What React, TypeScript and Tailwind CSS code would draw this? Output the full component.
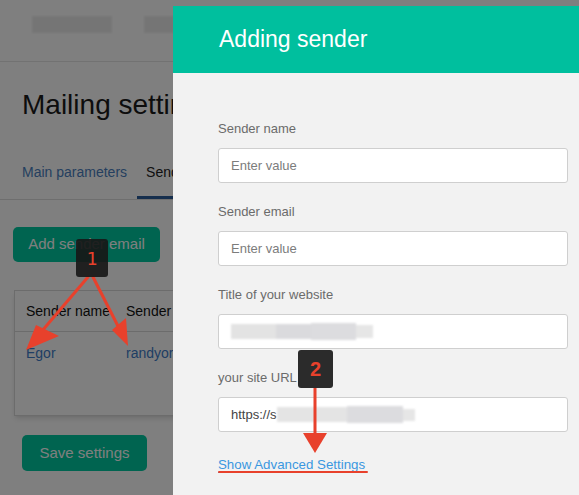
import React from "react";

const font = { fontFamily: '"Liberation Sans", Arial, sans-serif' };

function Field({ label, children }: { label: string; children: React.ReactNode }) {
  return (
    <div className="mb-5">
      <div className="text-[13px] leading-[18px] text-[#6b6b6b] mb-[10px]">{label}</div>
      <div className="h-[35px] w-[350px] rounded-[3px] border border-[#cfcfcf] bg-white flex items-center px-3 text-[13px]">
        {children}
      </div>
    </div>
  );
}

export default function App() {
  return (
    <div className="relative w-[579px] h-[495px] overflow-hidden bg-white" style={font}>
      {/* Page behind the modal */}
      <div className="flex flex-col">
        <div className="flex gap-8 pl-8 pt-4 h-[62px] items-start border-b border-[#e4e4e4]">
          <div className="w-[80px] h-[17px] bg-[#ebebeb] blur-[1px]" />
          <div className="w-[30px] h-[17px] bg-[#ebebeb] blur-[1px]" />
        </div>
        <h1 className="pl-[22px] pt-[25px] text-[28px] leading-[36px] text-[#1a1a1a]">Mailing settings</h1>
        <div className="mt-[39px] flex border-b border-[#dcdcdc] text-[14px]">
          <div className="pl-[22px] pr-[10px] pb-[15px] text-[#4a7fc0]">Main parameters</div>
          <div className="px-[9px] pb-[13px] border-b-[3px] border-[#2a5d9a] text-[#222]">Senders</div>
        </div>
        <div className="pl-[13px] pt-[27px]">
          <button className="h-[35px] w-[147px] rounded-[5px] bg-[#00c9a0] text-white text-[15px]">Add sender email</button>
        </div>
        <div className="ml-[14px] mt-[28px] w-[400px] h-[126px] border border-[#d8d8d8] bg-white shadow-md">
          <div className="flex h-[41px] items-center border-b border-[#d8d8d8] text-[14px] text-[#111]">
            <div className="w-[111px] pl-[11px]">Sender name</div>
            <div>Sender email</div>
          </div>
          <div className="flex h-[42px] items-center text-[14px] text-[#3e7cc8]">
            <div className="w-[111px] pl-[11px]">Egor</div>
            <div>randyorton@mail.com</div>
          </div>
        </div>
        <div className="pl-[22px] pt-[19px]">
          <button className="h-[36px] w-[125px] rounded-[5px] bg-[#00c9a0] text-white text-[15px]">Save settings</button>
        </div>
      </div>

      {/* Dim overlay */}
      <div className="absolute inset-0 bg-black/50" />

      {/* Modal */}
      <div className="absolute left-[173px] top-[6px] w-[420px] h-[500px] bg-[#f2f2f2]">
        <div className="h-[67px] bg-[#00bf9e] flex items-center pl-[46px]">
          <div className="text-[23px] text-white">Adding sender</div>
        </div>
        <div className="pl-[45px] pt-[47px]">
          <Field label="Sender name">
            <span className="text-[#7c7c7c]">Enter value</span>
          </Field>
          <Field label="Sender email">
            <span className="text-[#7c7c7c]">Enter value</span>
          </Field>
          <Field label="Title of your website">
            <div className="flex items-center blur-[1px]">
              <div className="w-[45px] h-[15px] bg-[#e3e3e3]" />
              <div className="w-[35px] h-[15px] bg-[#dadadd]" />
              <div className="w-[45px] h-[17px] bg-[#dcdcdf]" />
              <div className="w-[17px] h-[13px] bg-[#e6e6e6]" />
            </div>
          </Field>
          <Field label="your site URL">
            <span className="text-[#444]">https://s</span>
            <div className="flex items-center blur-[1px]">
              <div className="w-[70px] h-[15px] bg-[#e4e4e4]" />
              <div className="w-[56px] h-[17px] bg-[#dcdcdf]" />
              <div className="w-[12px] h-[12px] bg-[#e6e6e6]" />
            </div>
          </Field>
          <a className="text-[13.3px] leading-[18px] text-[#3a97e0] border-b border-dashed border-[#3a97e0] cursor-pointer">
            Show Advanced Settings
          </a>
        </div>
      </div>

      {/* Annotations */}
      <svg className="absolute inset-0" width="579" height="495" viewBox="0 0 579 495">
        <g stroke="#e8412c" strokeWidth="3" strokeLinecap="round" fill="#e8412c">
          <line x1="88" y1="277" x2="36" y2="338" />
          <line x1="93" y1="277" x2="122" y2="334" />
          <line x1="315" y1="385" x2="315" y2="440" />
          <line x1="219" y1="472" x2="367" y2="472" strokeWidth="2" />
        </g>
        <g fill="#e8412c">
          <polygon points="26,350 36,325 59,336" />
          <polygon points="128,346 112,330 126,318" />
          <polygon points="315,453 303,433 327,433" />
        </g>
        <rect x="76" y="239" width="32" height="38" rx="3" fill="#161616" fillOpacity="0.9" />
        <rect x="298" y="350" width="35" height="38" rx="3" fill="#2b2b2b" />
      </svg>
      <div className="absolute left-[76px] top-[239px] w-[32px] h-[38px] flex items-center justify-center text-[18px] text-[#e8412c]" style={{ fontFamily: '"DejaVu Sans Mono", monospace' }}>1</div>
      <div className="absolute left-[298px] top-[350px] w-[35px] h-[38px] flex items-center justify-center text-[20px] font-bold text-[#e8412c]">2</div>
    </div>
  );
}
